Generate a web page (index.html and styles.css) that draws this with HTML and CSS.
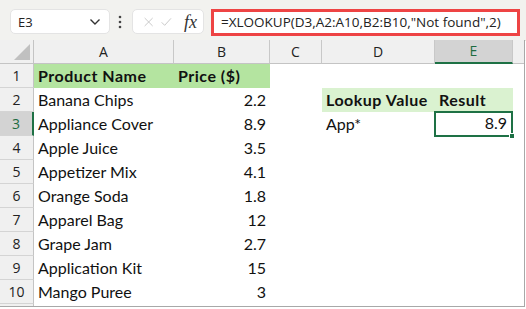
FILE: index.html
```html
<!DOCTYPE html>
<html>
<head>
<meta charset="utf-8">
<link rel="stylesheet" href="styles.css">
</head>
<body>
<div class="app">
  <div class="toolbar">
    <div class="namebox">
      <span class="name">E3</span>
      <svg class="chev" width="12" height="8" viewBox="0 0 12 8"><path d="M1.5 1.5 L6 6 L10.5 1.5" fill="none" stroke="#333" stroke-width="1.4"/></svg>
    </div>
    <svg class="dots" width="4" height="14" viewBox="0 0 4 14"><circle cx="2" cy="2" r="1.3" fill="#444"/><circle cx="2" cy="7" r="1.3" fill="#444"/><circle cx="2" cy="12" r="1.3" fill="#444"/></svg>
    <div class="btnbox">
      <svg width="14" height="14" viewBox="0 0 14 14"><path d="M1 1 L13 13 M13 1 L1 13" stroke="#bdbdbd" stroke-width="1.2"/></svg>
      <svg width="16" height="14" viewBox="0 0 16 14"><path d="M1 7.5 L5.5 12 L15 1.5" fill="none" stroke="#bdbdbd" stroke-width="1.2"/></svg>
      <span class="fx">fx</span>
    </div>
    <div class="formula">=XLOOKUP(D3,A2:A10,B2:B10,"Not found",2)</div>
  </div>
  <div class="sheet">
    <div class="corner"><div class="tri"></div></div>
    <div class="ch">A</div>
    <div class="ch">B</div>
    <div class="ch">C</div>
    <div class="ch">D</div>
    <div class="ch sel">E</div>
    <div class="ch last"></div>

    <div class="rh">1</div>
    <div class="c hdr b">Product Name</div>
    <div class="c hdr b">Price ($)</div>
    <div class="c"></div><div class="c"></div><div class="c"></div><div class="c"></div>

    <div class="rh">2</div>
    <div class="c">Banana Chips</div>
    <div class="c num">2.2</div>
    <div class="c"></div>
    <div class="c hdr2 b">Lookup Value</div>
    <div class="c hdr2 b">Result</div>
    <div class="c"></div>

    <div class="rh selr">3</div>
    <div class="c">Appliance Cover</div>
    <div class="c num">8.9</div>
    <div class="c"></div>
    <div class="c">App*</div>
    <div class="c num active">8.9<span class="handle"></span></div>
    <div class="c"></div>

    <div class="rh">4</div>
    <div class="c">Apple Juice</div>
    <div class="c num">3.5</div>
    <div class="c"></div><div class="c"></div><div class="c"></div><div class="c"></div>

    <div class="rh">5</div>
    <div class="c">Appetizer Mix</div>
    <div class="c num">4.1</div>
    <div class="c"></div><div class="c"></div><div class="c"></div><div class="c"></div>

    <div class="rh">6</div>
    <div class="c">Orange Soda</div>
    <div class="c num">1.8</div>
    <div class="c"></div><div class="c"></div><div class="c"></div><div class="c"></div>

    <div class="rh">7</div>
    <div class="c">Apparel Bag</div>
    <div class="c num">12</div>
    <div class="c"></div><div class="c"></div><div class="c"></div><div class="c"></div>

    <div class="rh">8</div>
    <div class="c">Grape Jam</div>
    <div class="c num">2.7</div>
    <div class="c"></div><div class="c"></div><div class="c"></div><div class="c"></div>

    <div class="rh">9</div>
    <div class="c">Application Kit</div>
    <div class="c num">15</div>
    <div class="c"></div><div class="c"></div><div class="c"></div><div class="c"></div>

    <div class="rh">10</div>
    <div class="c">Mango Puree</div>
    <div class="c num">3</div>
    <div class="c"></div><div class="c"></div><div class="c"></div><div class="c"></div>

    <div class="rh"></div>
    <div class="c"></div><div class="c"></div><div class="c"></div><div class="c"></div><div class="c"></div><div class="c"></div>
  </div>
</div>
</body>
</html>
```
FILE: styles.css
```css
* { box-sizing: border-box; }
html, body { margin: 0; padding: 0; background: #fff; }
.app {
  width: 526px;
  height: 309px;
  overflow: hidden;
  position: relative;
  font-family: "Open Sans", "Noto Sans", sans-serif;
}
.toolbar {
  height: 41px;
  background: #f2f2ef;
  display: flex;
  align-items: flex-start;
  padding: 9px 0 0 10px;
  border-bottom: 1px solid #e6e6dc;
}
.namebox {
  width: 100px;
  height: 25px;
  background: #fff;
  border-radius: 5px;
  border: 1px solid #e4e4e4;
  display: flex;
  align-items: center;
  justify-content: space-between;
  padding: 0 8px 0 7px;
}
.name { font-size: 13px; color: #222; }
.dots { margin: 6px 0 0 8px; }
.btnbox {
  margin-left: 10px;
  width: 72px;
  height: 25px;
  background: #fff;
  border-radius: 5px;
  border: 1px solid #e4e4e4;
  display: flex;
  align-items: center;
  gap: 8px;
  padding: 0 6px 0 11px;
}
.fx {
  font-family: "Liberation Serif", serif;
  font-style: italic;
  font-size: 18px;
  color: #333;
  margin-left: 4px;
  line-height: 1;
}
.formula {
  margin-left: 7px;
  width: 309px;
  height: 27px;
  background: #fff;
  border: 3px solid #ee4444;
  font-size: 13.5px;
  color: #222;
  padding: 0 0 0 7px;
  line-height: 21px;
  white-space: nowrap;
}
.sheet {
  display: grid;
  grid-template-columns: 34px 140px 96px 52px 113px 78px 11px;
  grid-template-rows: 24px repeat(11, 24px);
  width: 525px;
  height: 267px;
  overflow: hidden;
  border-right: 1px solid #a8a8a8;
  border-bottom: 1px solid #a8a8a8;
  margin-top: -1px;
}
.corner {
  background: #f0f0f0;
  border-right: 1px solid #c4c4c4;
  border-bottom: 1px solid #c4c4c4;
  position: relative;
}
.tri {
  position: absolute;
  right: 3px;
  bottom: 3px;
  width: 0; height: 0;
  border-left: 16px solid transparent;
  border-bottom: 16px solid #c0c0c0;
}
.ch {
  background: #f0f0f0;
  border-right: 1px solid #c8c8c8;
  border-bottom: 1px solid #c4c4c4;
  font-size: 14px;
  color: #222;
  text-align: center;
  line-height: 23px;
}
.ch.last { border-right: none; }
.ch.sel {
  background: #d3d3d3;
  color: #1e6b41;
  border-bottom: 2px solid #1e7145;
  line-height: 22px;
}
.rh {
  background: #f0f0f0;
  border-right: 1px solid #c4c4c4;
  border-bottom: 1px solid #d4d4d4;
  font-size: 14px;
  color: #222;
  text-align: center;
  line-height: 23px;
}
.rh.selr {
  background: #d3d3d3;
  color: #1e6b41;
  border-right: 2px solid #1e7145;
}
.c {
  font-family: "Lato", "Noto Sans", sans-serif;
  font-size: 16px;
  color: #111;
  padding: 0 4px;
  line-height: 24px;
  white-space: nowrap;
  position: relative;
}
.c.b { font-weight: 700; letter-spacing: 0.5px; }
.c.num { text-align: right; padding-right: 4px; }
.hdr { background: #b4e4a0; }
.hdr2 { background: #daf2d0; }
.active {
  border: 2px solid #1e7145;
  line-height: 20px;
  margin: -1px 0 -1px -1px;
  padding-right: 3px;
}
.handle {
  position: absolute;
  right: -4px;
  bottom: -4px;
  width: 6px;
  height: 6px;
  background: #1e7145;
  border: 1px solid #fff;
}
```
